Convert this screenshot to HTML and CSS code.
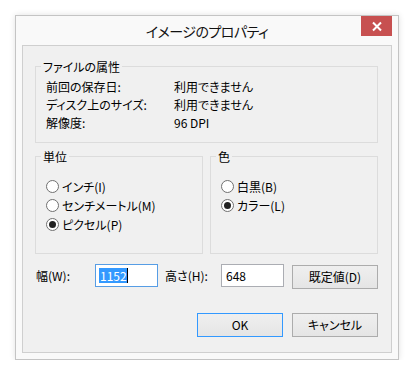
FILE: index.html
```html
<!DOCTYPE html>
<html lang="ja">
<head>
<meta charset="utf-8">
<title>イメージのプロパティ</title>
<link rel="stylesheet" href="styles.css">
</head>
<body>
<div class="window">
  <div class="titlebar">
    <span class="spacer"></span>
    <div class="title">イメージのプロパティ</div>
    <div class="close">
      <svg width="31" height="20" viewBox="0 0 31 20"><path d="M12 6.5 L20 14.5 M20 6.5 L12 14.5" stroke="#fff" stroke-width="2" fill="none"/></svg>
    </div>
  </div>
  <div class="client">
    <fieldset class="group info">
      <legend>ファイルの属性</legend>
      <div class="row"><span class="key">前回の保存日:</span><span>利用できません</span></div>
      <div class="row"><span class="key">ディスク上のサイズ:</span><span>利用できません</span></div>
      <div class="row"><span class="key">解像度:</span><span>96 DPI</span></div>
    </fieldset>
    <div class="groups">
      <fieldset class="group choice">
        <legend>単位</legend>
        <div class="radio"><span class="dot"></span>インチ(I)</div>
        <div class="radio"><span class="dot"></span>センチメートル(M)</div>
        <div class="radio"><span class="dot on"></span>ピクセル(P)</div>
      </fieldset>
      <fieldset class="group choice">
        <legend>色</legend>
        <div class="radio"><span class="dot"></span>白黒(B)</div>
        <div class="radio"><span class="dot on"></span>カラー(L)</div>
      </fieldset>
    </div>
    <div class="dims">
      <span class="lbl lbl-w">幅(W):</span>
      <div class="field focus"><span class="sel">1152</span><span class="caret"></span></div>
      <span class="lbl lbl-h">高さ(H):</span>
      <div class="field">648</div>
      <div class="btn btn-reset">既定値(D)</div>
    </div>
    <div class="actions">
      <div class="btn default">OK</div>
      <div class="btn">キャンセル</div>
    </div>
  </div>
</div>
</body>
</html>
```

FILE: styles.css
```css
html, body {
  margin: 0;
  background: #ffffff;
}
body {
  font-family: "Noto Sans CJK JP", "Noto Sans", sans-serif;
  font-size: 12px;
  color: #000000;
  font-feature-settings: "palt";
}
.window {
  margin: 15px 0 0 15px;
  width: 384px;
  height: 345px;
  box-sizing: border-box;
  border: 1px solid #c4c4c4;
  background: #f9f9f9;
  box-shadow: 0 0 6px rgba(0, 0, 0, 0.12);
  padding: 0 6px 6px 6px;
  display: flex;
  flex-direction: column;
}
.titlebar {
  height: 29px;
  flex: none;
  display: grid;
  grid-template-columns: 1fr auto 1fr;
  align-items: start;
}
.title {
  font-size: 14px;
  letter-spacing: -0.5px;
  line-height: 29px;
  padding-top: 1px;
  color: #111;
}
.close {
  justify-self: end;
  width: 31px;
  height: 20px;
  background: #c75050;
}
.close svg { display: block; }
.client {
  flex: 1;
  border: 1px solid #cfcfcf;
  background: #f0f0f0;
  padding: 13px 13px 0 12px;
  display: flex;
  flex-direction: column;
}
.group {
  margin: 0;
  border: 1px solid #dcdcdc;
  box-sizing: border-box;
  min-width: 0;
}
.group legend {
  line-height: 15px;
  padding: 0 2px;
  margin-left: -5px;
}
.info {
  height: 84px;
  padding: 4px 10px 0 10px;
}
.row {
  display: flex;
  line-height: 18px;
  height: 18px;
}
.row .key {
  width: 128px;
}
.groups {
  margin-top: 6px;
  display: flex;
  gap: 7px;
}
.choice {
  width: 168px;
  height: 105px;
  padding: 13px 10px 0 10px;
}
.radio {
  display: flex;
  align-items: center;
  height: 19px;
  line-height: 19px;
}
.dot {
  width: 13px;
  height: 13px;
  box-sizing: border-box;
  border: 1px solid #707070;
  border-radius: 50%;
  background: #ffffff;
  margin-right: 3px;
  display: flex;
  align-items: center;
  justify-content: center;
  flex: none;
}
.dot.on::after {
  content: "";
  width: 7px;
  height: 7px;
  border-radius: 50%;
  background: #222;
}
.dims {
  margin-top: 10px;
  display: flex;
  align-items: flex-start;
  height: 25px;
}
.lbl {
  line-height: 23px;
  margin-left: 1px;
}
.lbl-w { width: 59px; }
.lbl-h { width: 56px; margin-left: 7px; }
.field {
  width: 63px;
  height: 23px;
  box-sizing: border-box;
  border: 1px solid #abadb3;
  background: #ffffff;
  padding-left: 4px;
  line-height: 21px;
  display: flex;
  align-items: center;
}
.field.focus {
  border-color: #569de5;
  padding-left: 3px;
}
.sel {
  background: #3399ff;
  color: #ffffff;
  line-height: 15px;
  padding: 0 0 0 1px;
}
.caret {
  width: 1px;
  height: 15px;
  background: #000;
}
.btn {
  width: 86px;
  height: 24px;
  box-sizing: border-box;
  border: 1px solid #acacac;
  background: linear-gradient(#efefef, #e5e5e5);
  display: flex;
  align-items: center;
  justify-content: center;
  line-height: 22px;
}
.btn-reset {
  margin-left: 8px;
  margin-top: 1px;
}
.btn.default {
  border-color: #3399ff;
}
.actions {
  margin-top: 24px;
  display: flex;
  justify-content: flex-end;
  gap: 9px;
}
```
